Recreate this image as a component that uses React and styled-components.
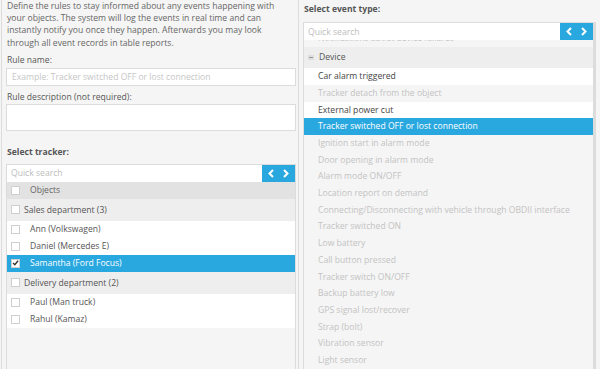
import React from 'react';
import styled, {createGlobalStyle} from 'styled-components';

const GlobalStyle = createGlobalStyle`
    body {
        margin: 0;
        background: #f5f5f5;
    }
    * {
        box-sizing: border-box;
    }
`;

const introLines = [
    'Define the rules to stay informed about any events happening with',
    'your objects. The system will log the events in real time and can',
    'instantly notify you once they happen. Afterwards you may look',
    'through all event records in table reports.',
];

const trackerGroups = [
    {
        name: 'Sales department (3)',
        items: [
            {name: 'Ann (Volkswagen)'},
            {name: 'Daniel (Mercedes E)'},
            {name: 'Samantha (Ford Focus)', checked: true},
        ],
    },
    {
        name: 'Delivery department (2)',
        items: [
            {name: 'Paul (Man truck)'},
            {name: 'Rahul (Kamaz)'},
        ],
    },
];

const deviceEvents = [
    {name: 'Car alarm triggered'},
    {name: 'Tracker detach from the object', disabled: true},
    {name: 'External power cut'},
    {name: 'Tracker switched OFF or lost connection', selected: true},
    {name: 'Ignition start in alarm mode', disabled: true},
    {name: 'Door opening in alarm mode', disabled: true},
    {name: 'Alarm mode ON/OFF', disabled: true},
    {name: 'Location report on demand', disabled: true},
    {name: 'Connecting/Disconnecting with vehicle through OBDII interface', disabled: true},
    {name: 'Tracker switched ON', disabled: true},
    {name: 'Low battery', disabled: true},
    {name: 'Call button pressed', disabled: true},
    {name: 'Tracker switch ON/OFF', disabled: true},
    {name: 'Backup battery low', disabled: true},
    {name: 'GPS signal lost/recover', disabled: true},
    {name: 'Strap (bolt)', disabled: true},
    {name: 'Vibration sensor', disabled: true},
    {name: 'Light sensor', disabled: true},
];

function Arrows() {
    return (
        <Styled.ArrowBtn>
            <svg width="8" height="9" viewBox="0 0 8 9">
                <polyline points="6,1 2.5,4.5 6,8" fill="none" stroke="#fff" strokeWidth="2" />
            </svg>
            <svg width="8" height="9" viewBox="0 0 8 9">
                <polyline points="2,1 5.5,4.5 2,8" fill="none" stroke="#fff" strokeWidth="2" />
            </svg>
        </Styled.ArrowBtn>
    );
}

function SearchBar() {
    return (
        <Styled.Search>
            <input placeholder="Quick search" />
            <Arrows />
        </Styled.Search>
    );
}

function CheckBox({checked}) {
    return (
        <Styled.Box>
            {checked && (
                <svg width="8" height="8" viewBox="0 0 8 8">
                    <polyline points="1.2,4 3.2,6 7,1.5" fill="none" stroke="#333" strokeWidth="1.6" />
                </svg>
            )}
        </Styled.Box>
    );
}

function App() {
    return (
        <>
        <GlobalStyle />
        <Styled.Page>
            <Styled.LeftCol>
                <Styled.Intro>
                    {introLines.map((l, i) => <span key={i}>{l}</span>)}
                </Styled.Intro>
                <Styled.Label>Rule name:</Styled.Label>
                <Styled.TextInput placeholder="Example: Tracker switched OFF or lost connection" />
                <Styled.Label>Rule description (not required):</Styled.Label>
                <Styled.TextArea />
                <Styled.Heading top={15}>Select tracker:</Styled.Heading>
                <Styled.ListFrame top={6}>
                    <SearchBar />
                    <Styled.HeadRow>
                        <CheckBox />
                        <span>Objects</span>
                    </Styled.HeadRow>
                    {trackerGroups.map((g, gi) => (
                        <React.Fragment key={gi}>
                            <Styled.GroupRow>
                                <CheckBox />
                                <span>{g.name}</span>
                            </Styled.GroupRow>
                            {g.items.map((it, ii) => (
                                <Styled.ObjRow key={ii} selected={it.checked}>
                                    <CheckBox checked={it.checked} />
                                    <span>{it.name}</span>
                                </Styled.ObjRow>
                            ))}
                        </React.Fragment>
                    ))}
                </Styled.ListFrame>
            </Styled.LeftCol>
            <Styled.RightCol>
                <Styled.Heading top={3}>Select event type:</Styled.Heading>
                <Styled.ListFrame top={7} edge>
                    <SearchBar />
                    <Styled.Scroller>
                        <Styled.EventRow disabled clipped>Notifications about device failures</Styled.EventRow>
                        <Styled.EventGroup>
                            <Styled.Minus />
                            <span>Device</span>
                        </Styled.EventGroup>
                        {deviceEvents.map((e, i) => (
                            <Styled.EventRow key={i} disabled={e.disabled} selected={e.selected}>
                                {e.name}
                            </Styled.EventRow>
                        ))}
                    </Styled.Scroller>
                </Styled.ListFrame>
            </Styled.RightCol>
        </Styled.Page>
        </>
    );
}

const base = {
    font: '"Open Sans", "DejaVu Sans", sans-serif',
    ft: 8.6,
    text: '#555',
    muted: '#c3c3c3',
    line: '#dcdcdc',
    blue: '#29a8e0',
};

const Styled = {
    Page: styled.div`
        width: 600px;
        height: 369px;
        overflow: hidden;
        display: grid;
        grid-template-columns: 299px 301px;
        background: #f5f5f5;
        font-family: ${base.font};
        font-size: ${base.ft}px;
        color: ${base.text};
    `,
    LeftCol: styled.div`
        margin-left: 1px;
        border-left: 1px solid ${base.line};
        border-right: 1px solid ${base.line};
        padding: 0 2px 0 4px;
        display: flex;
        flex-direction: column;
        min-height: 0;
    `,
    RightCol: styled.div`
        padding: 0 4px 0 4px;
        display: flex;
        flex-direction: column;
        min-height: 0;
    `,
    Intro: styled.p`
        margin: 0;
        padding-left: 1px;
        line-height: 12.2px;
        color: #666;
        & span {
            display: block;
            white-space: nowrap;
        }
    `,
    Label: styled.div`
        margin-top: 5px;
        padding-left: 1px;
        line-height: 12px;
        color: #555;
    `,
    Heading: styled.div`
        margin-top: ${props => props.top}px;
        padding-left: 1px;
        line-height: 12px;
        font-weight: 700;
        color: #555;
    `,
    TextInput: styled.input`
        display: block;
        margin-top: 2px;
        width: 100%;
        height: 18px;
        border: 1px solid ${base.line};
        background: #fff;
        padding: 0 5px;
        font-family: ${base.font};
        font-size: ${base.ft}px;
        outline: none;
        &::placeholder {
            color: #c6c6c6;
        }
    `,
    TextArea: styled.textarea`
        display: block;
        margin-top: 1px;
        width: 100%;
        height: 27px;
        border: 1px solid ${base.line};
        background: #fff;
        resize: none;
        outline: none;
    `,
    ListFrame: styled.div`
        margin-top: ${props => props.top}px;
        flex: 1;
        min-height: 0;
        display: flex;
        flex-direction: column;
        border-left: 1px solid ${base.line};
        border-right: ${props => props.edge ? 3 : 1}px solid ${base.line};
        background: #f5f5f5;
        overflow: hidden;
    `,
    Search: styled.div`
        display: flex;
        height: 18px;
        flex: none;
        border-top: 1px solid ${base.line};
        background: #fff;
        & input {
            flex: 1;
            min-width: 0;
            border: none;
            outline: none;
            padding: 0 4px;
            background: transparent;
            font-family: ${base.font};
            font-size: ${base.ft}px;
            &::placeholder {
                color: #bdbdbd;
            }
        }
    `,
    ArrowBtn: styled.div`
        width: 33px;
        display: flex;
        align-items: center;
        justify-content: center;
        gap: 7px;
        background: ${base.blue};
    `,
    Box: styled.span`
        width: 9px;
        height: 9px;
        flex: none;
        display: inline-flex;
        align-items: center;
        justify-content: center;
        border: 1px solid #cfcfcf;
        background: #fff;
    `,
    HeadRow: styled.div`
        height: 17px;
        flex: none;
        display: flex;
        align-items: center;
        padding-left: 4px;
        gap: 10px;
        background: #e2e2e2;
        color: #666;
    `,
    GroupRow: styled.div`
        height: 22px;
        flex: none;
        display: flex;
        align-items: center;
        padding-left: 4px;
        gap: 4px;
        background: #eeeeee;
        color: #555;
    `,
    ObjRow: styled.div`
        height: 17px;
        flex: none;
        display: flex;
        align-items: center;
        padding-left: 4px;
        gap: 10px;
        background: ${props => props.selected ? base.blue : '#fff'};
        color: ${props => props.selected ? '#fff' : '#555'};
    `,
    Scroller: styled.div`
        flex: 1;
        min-height: 0;
        overflow: hidden;
    `,
    EventGroup: styled.div`
        height: 21.6px;
        display: flex;
        align-items: center;
        gap: 5px;
        padding-left: 4px;
        background: #eeeeee;
        color: #555;
    `,
    Minus: styled.span`
        width: 6px;
        height: 5px;
        display: inline-flex;
        align-items: center;
        justify-content: center;
        background: #dedede;
        &::after {
            content: '';
            width: 4px;
            height: 1px;
            background: #999;
        }
    `,
    EventRow: styled.div`
        height: 16.7px;
        line-height: 16.7px;
        padding-left: 14px;
        white-space: nowrap;
        margin-top: ${props => props.clipped ? -10 : 0}px;
        background: ${props => props.selected ? base.blue : props.disabled ? '#f5f5f5' : '#fff'};
        color: ${props => props.selected ? '#fff' : props.disabled ? base.muted : '#444'};
    `,
};

export default App;
